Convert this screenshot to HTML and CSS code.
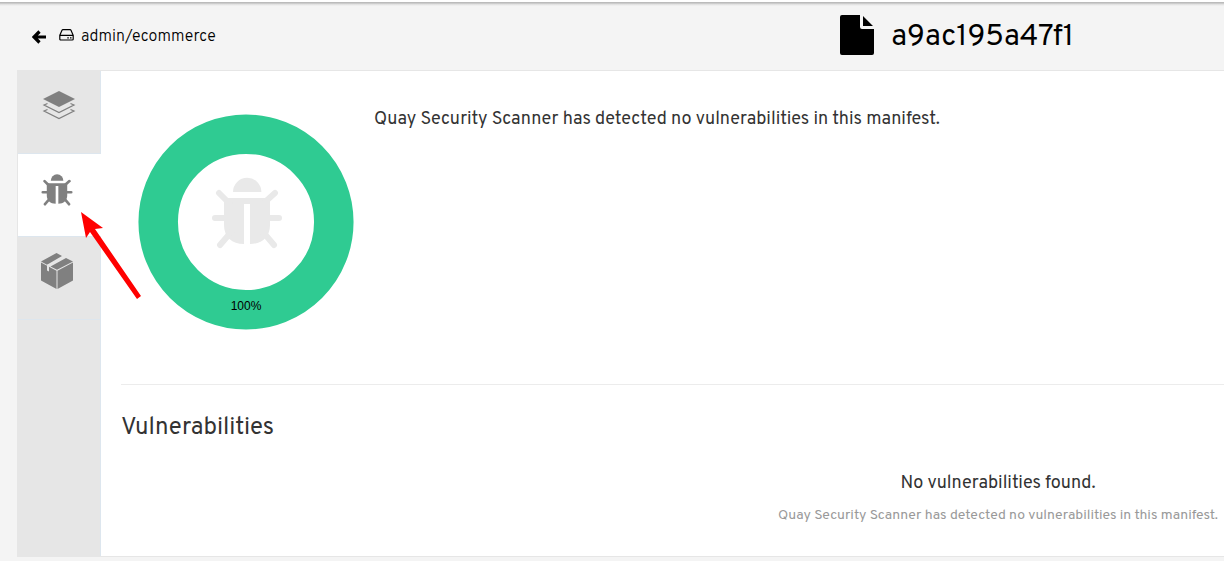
FILE: index.html
```html
<!DOCTYPE html>
<html lang="en">
<head>
<meta charset="utf-8">
<meta name="viewport" content="width=device-width, initial-scale=1">
<title>a9ac195a47f1 · admin/ecommerce</title>
<link rel="stylesheet" href="styles.css">
</head>
<body>
<svg class="sprite" aria-hidden="true">
  <symbol id="bug" viewBox="0 0 72 72">
    <path d="M22 15a14.200 14.200 0 0 1 28.400 0z"/>
    <path d="M13 21h46v27c0 12-8 19-20 19V27h-6v40c-12 0-20-7-20-19z"/>
    <path d="M8 16l10 10M64 16L54 25M4 41h12M56 41h12M9 68l12-14M63 68L52 55" fill="none" stroke="currentColor" stroke-width="6" stroke-linecap="round"/>
  </symbol>
</svg>
<header class="header">
  <nav class="crumbs" aria-label="Breadcrumb">
    <a class="back" href="#" aria-label="Back">
      <svg width="14" height="14" viewBox="0 0 14 14"><path d="M7.500 1.500L2 7l5.500 5.500M2.500 7H14" fill="none" stroke="currentColor" stroke-width="3.200"/></svg>
    </a>
    <a class="repo" href="#">
      <svg width="15" height="12" viewBox="0 0 15 12"><path d="M.8 6.300L3 1.300Q3.300.7 4 .7h7q.7 0 1 .6l2.200 5v4q0 .7-1 .7H1.800q-1 0-1-.7zM.8 6.300h13.400M8.300 8.800h1.500M11 8.800h1.500" fill="none" stroke="currentColor" stroke-width="1.200"/></svg>
      <span class="label">admin/ecommerce</span>
    </a>
  </nav>
  <h1 class="title">
    <svg width="34" height="40" viewBox="0 0 34 40"><path d="M2 0h18v12q0 2 2 2h12v24q0 2-2 2H2q-2 0-2-2V2q0-2 2-2zM23 1l10 10H23z"/></svg>
    <span class="label">a9ac195a47f1</span>
  </h1>
</header>
<main class="panel">
  <nav class="tabs" aria-label="Manifest sections">
    <a class="tab" href="#" aria-label="Layers">
      <svg width="34" height="30" viewBox="0 0 34 30"><path d="M17 0l16 8-16 8L1 8z"/><path d="M5.500 12.500L2 14l15 7.500L32 14l-3.500-1.500M5.500 18.500L2 20l15 7.500L32 20l-3.500-1.500" fill="none" stroke="currentColor" stroke-width="1.200"/></svg>
    </a>
    <a class="tab active" href="#" aria-label="Security scan" aria-current="page">
      <svg width="32" height="32"><use href="#bug"/></svg>
    </a>
    <a class="tab" href="#" aria-label="Packages">
      <svg width="32" height="36" viewBox="0 0 32 36"><path d="M0 9.500l15.500 8.300V36L0 27.500zM32 9.500V27.500L16.500 36V17.800zM0 8.500L15.500 0l5.500 3L6 11.700zM9.500 13.500L25 5l7 3.500-16 8.300z"/><path d="M6 11.600l2 1v6l-2-1z" fill="#e6e6e6"/></svg>
    </a>
  </nav>
  <section class="content">
    <div class="summary">
      <svg class="donut" width="216" height="216" viewBox="0 0 216 216" role="img" aria-label="100% without vulnerabilities">
        <circle cx="108" cy="108" r="87.800" fill="none" stroke="#2fcb92" stroke-width="39.500"/>
        <use href="#bug" x="73" y="63" width="72" height="72" fill="#e9e9e9" color="#e9e9e9"/>
        <text class="share" x="108" y="196" text-anchor="middle">100%</text>
      </svg>
      <p class="verdict">Quay Security Scanner has detected no vulnerabilities in this manifest.</p>
    </div>
    <h2 class="heading">Vulnerabilities</h2>
    <div class="empty">
      <p class="empty-title">No vulnerabilities found.</p>
      <p class="empty-text">Quay Security Scanner has detected no vulnerabilities in this manifest.</p>
    </div>
  </section>
  <svg class="pointer" width="64" height="92" viewBox="0 0 64 92" aria-hidden="true"><path d="M3 3l22 16-8 1 46 67-4 3-47-67-4 6z"/></svg>
</main>
</body>
</html>
```
FILE: styles.css
```css
* { box-sizing: border-box; }
body {
  margin: 0;
  min-height: 100vh;
  background: #f4f4f4;
  color: #333;
  font-family: Overpass, Roboto, "Liberation Sans", sans-serif;
}
h1, h2, p { margin: 0; font-weight: 400; }
a { color: inherit; text-decoration: none; }
svg { display: block; fill: currentColor; flex: none; }
.sprite { position: absolute; width: 0; height: 0; }

.header {
  display: flex;
  align-items: center;
  justify-content: space-between;
  height: 70px;
  padding: 0 150px 0 32px;
  color: #000;
  background: linear-gradient(#fff 0 2px, #bbb 2px 3px, #ddd 4px, #f4f4f4 6px);
}
.crumbs, .repo, .title { display: flex; align-items: center; }
.crumbs { gap: 13px; font-size: 16px; font-weight: 300; }
.back { padding-top: 4px; }
.repo { gap: 7px; }
.title { gap: 17px; font-size: 30px; }
.label { padding-top: 4px; }

.panel {
  position: relative;
  display: flex;
  margin-left: 17px;
  border: 1px solid #e6e6e6;
  border-right: 0;
  background: #fff;
}
.tabs {
  width: 83px;
  background: #e6e6e6;
  border-right: 1px solid #dde6ee;
  color: #808080;
}
.tab {
  display: flex;
  justify-content: center;
  height: 83px;
  padding: 20px 4px 0 0;
  border-bottom: 1px solid #dde6ee;
}
.tab:first-child { padding-right: 0; }
.tab.active { margin-right: -1px; background: #fff; padding-right: 5px; }
.tab:last-child { padding-top: 16px; }

.content { flex: 1; padding: 0 0 30px 20px; }
.summary {
  display: flex;
  gap: 20px;
  padding: 43px 0 54px 17px;
  border-bottom: 1px solid #ececec;
}
.verdict { margin-top: -6px; font-size: 18px; line-height: 24px; }
.share { fill: #000; font: 12px "Liberation Sans", Arial, sans-serif; }
.heading { padding-top: 27px; font-size: 24px; line-height: 32px; }
.empty {
  display: flex;
  flex-direction: column;
  align-items: center;
  gap: 10px;
  width: fit-content;
  margin: 28px 6px 0 auto;
}
.empty-title { font-size: 18px; line-height: 24px; }
.empty-text { color: #999; font-size: 14px; line-height: 20px; }
.pointer { position: absolute; left: 60px; top: 138px; color: #f00; }
```
